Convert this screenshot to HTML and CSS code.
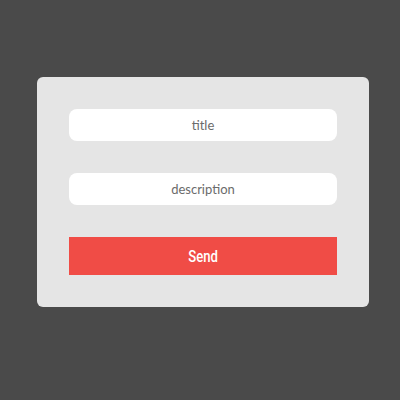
FILE: index.html
```html
<!DOCTYPE html>
<html>
<head>
<meta charset="utf-8">
<link rel="stylesheet" href="styles.css">
</head>
<body>
<form class="card">
  <input class="field" type="text" placeholder="title">
  <input class="field" type="text" placeholder="description">
  <button class="send" type="button"><span class="send-label">Send</span></button>
</form>
</body>
</html>
```
FILE: styles.css
```css
html, body {
  margin: 0;
  padding: 0;
  background: #4a4a4a;
  width: 400px;
  height: 400px;
  overflow: hidden;
}
body {
  padding: 77px 0 0 37px;
  box-sizing: border-box;
}
.card {
  width: 332px;
  box-sizing: border-box;
  padding: 32px;
  background: #e5e5e5;
  border-radius: 6px;
  display: flex;
  flex-direction: column;
  gap: 32px;
  margin: 0;
}
.field {
  display: block;
  width: 268px;
  height: 32px;
  box-sizing: border-box;
  border: none;
  border-radius: 8px;
  background: #fff;
  text-align: center;
  font-family: Lato, sans-serif;
  font-size: 13px;
  color: #666;
  outline: none;
  padding: 0;
  margin: 0;
}
.field::placeholder {
  color: #6b6b6b;
  opacity: 1;
}
.send {
  display: flex;
  align-items: center;
  justify-content: center;
  width: 268px;
  height: 38px;
  border: none;
  background: #f04c46;
  color: #fff;
  font-family: Roboto, sans-serif;
  font-weight: 500;
  font-size: 16px;
  padding: 0;
  margin: 0;
}
.send-label {
  display: inline-block;
  transform: scaleX(0.82);
}
```
